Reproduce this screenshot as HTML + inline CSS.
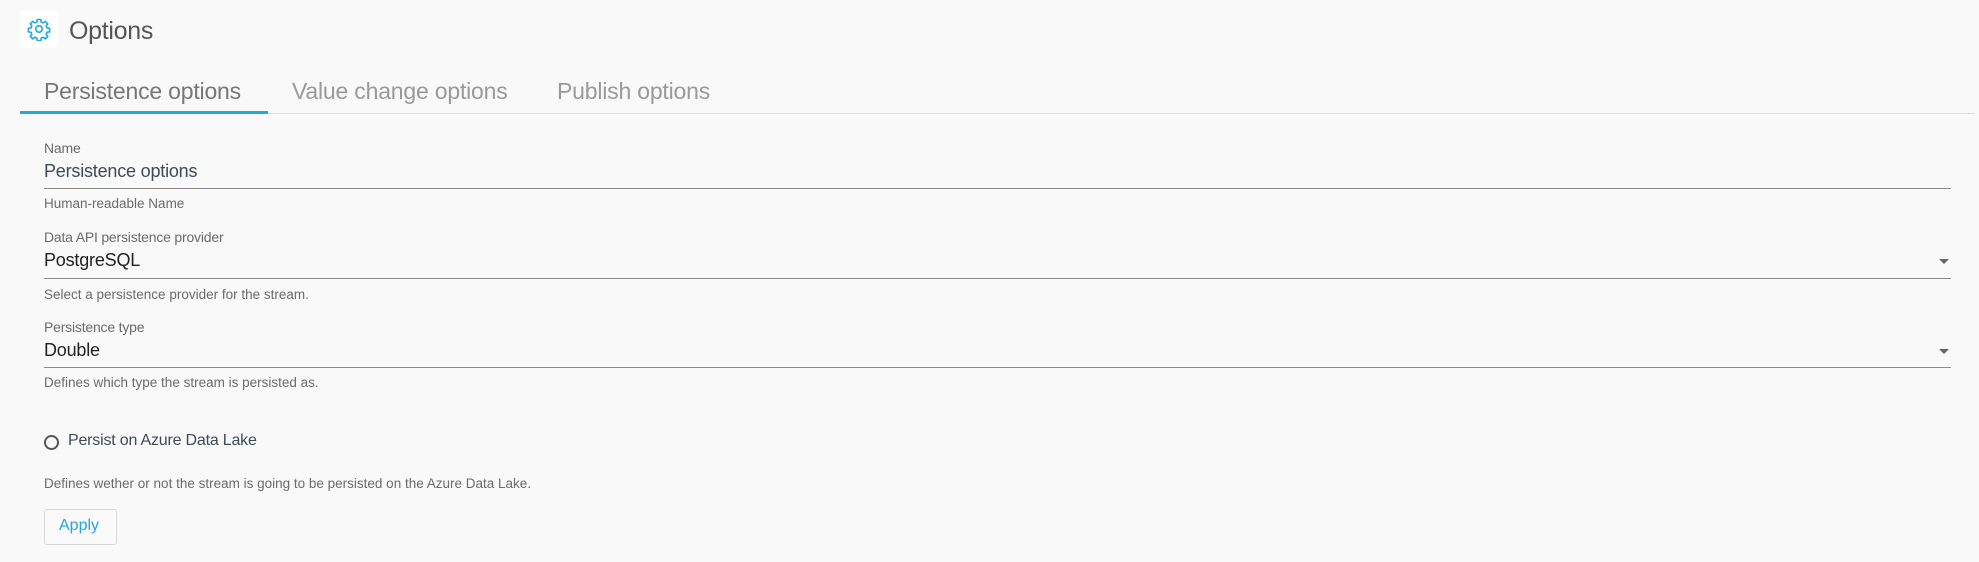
<!DOCTYPE html>
<html><head><meta charset="utf-8"><style>
html,body{margin:0;padding:0;background:#f9f9f9;width:1979px;height:562px;overflow:hidden;font-family:"Liberation Sans",sans-serif;}
.a{position:absolute;white-space:nowrap;}
.lbl{font-size:14px;color:#6b6b6b;letter-spacing:-0.2px;}
.help{font-size:13.5px;color:#6b6b6b;letter-spacing:0;}
.line{position:absolute;left:44px;width:1907px;height:1px;background:#8a8a8a;}
.arrow{position:absolute;left:1939px;width:0;height:0;border-left:5px solid transparent;border-right:5px solid transparent;border-top:5px solid #666;}
</style></head><body>
<div class="a" style="left:20px;top:10px;width:38px;height:38px;background:#fff;border-radius:3px;"></div>
<svg class="a" style="left:27px;top:17px" width="24" height="24" viewBox="0 0 24 24" fill="none" stroke="#1ea7e1" stroke-width="1.6">
<path d="M10.3 2.5h3.4l.5 2.6 1.9.8 2.2-1.5 2.4 2.4-1.5 2.2.8 1.9 2.6.5v3.4l-2.6.5-.8 1.9 1.5 2.2-2.4 2.4-2.2-1.5-1.9.8-.5 2.6h-3.4l-.5-2.6-1.9-.8-2.2 1.5-2.4-2.4 1.5-2.2-.8-1.9-2.6-.5v-3.4l2.6-.5.8-1.9-1.5-2.2 2.4-2.4 2.2 1.5 1.9-.8z"/>
<circle cx="12" cy="12" r="3.2"/></svg>
<div class="a" style="left:69px;top:17px;font-size:25px;color:#555;letter-spacing:-0.3px;">Options</div>
<div class="a" style="left:44px;top:78px;font-size:23px;color:#777;letter-spacing:-0.2px;">Persistence options</div>
<div class="a" style="left:292px;top:78px;font-size:23px;color:#999;letter-spacing:-0.2px;">Value change options</div>
<div class="a" style="left:557px;top:78px;font-size:23px;color:#999;letter-spacing:-0.2px;">Publish options</div>
<div class="a" style="left:268px;top:113px;width:1707px;height:1px;background:#ddd;"></div>
<div class="a" style="left:20px;top:111px;width:248px;height:3px;background:#1ea7e1;"></div>

<div class="a lbl" style="left:44px;top:140px;">Name</div>
<div class="a" style="left:44px;top:161px;font-size:18px;color:#3d4a5a;letter-spacing:-0.2px;">Persistence options</div>
<div class="line" style="top:188px;"></div>
<div class="a help" style="left:44px;top:196px;">Human-readable Name</div>

<div class="a lbl" style="left:44px;top:229px;">Data API persistence provider</div>
<div class="a" style="left:44px;top:250px;font-size:18px;color:#222;letter-spacing:-0.2px;">PostgreSQL</div>
<div class="arrow" style="top:259px;"></div>
<div class="line" style="top:278px;"></div>
<div class="a help" style="left:44px;top:287px;">Select a persistence provider for the stream.</div>

<div class="a lbl" style="left:44px;top:319px;">Persistence type</div>
<div class="a" style="left:44px;top:340px;font-size:18px;color:#222;letter-spacing:-0.2px;">Double</div>
<div class="arrow" style="top:349px;"></div>
<div class="line" style="top:367px;"></div>
<div class="a help" style="left:44px;top:375px;">Defines which type the stream is persisted as.</div>

<div class="a" style="left:44px;top:435px;width:11px;height:11px;border:2px solid #555;border-radius:50%;"></div>
<div class="a" style="left:68px;top:432px;font-size:16px;color:#3d4a5a;letter-spacing:-0.2px;">Persist on Azure Data Lake</div>
<div class="a help" style="left:44px;top:476px;">Defines wether or not the stream is going to be persisted on the Azure Data Lake.</div>

<div class="a" style="left:44px;top:509px;width:71px;height:34px;border:1px solid #d8d8d8;border-radius:3px;background:#fafafa;"></div>
<div class="a" style="left:59px;top:517px;font-size:16px;color:#1ea7e1;">Apply</div>
</body></html>
